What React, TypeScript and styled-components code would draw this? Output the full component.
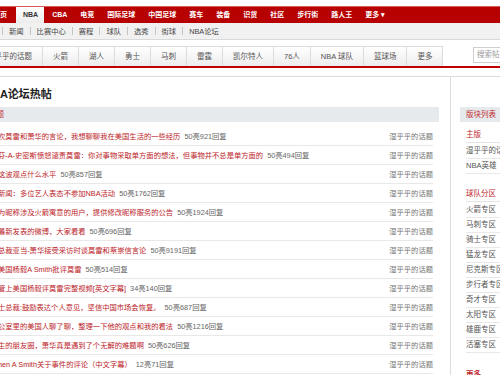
import React from 'react';
import styled, { createGlobalStyle } from 'styled-components';

const GlobalStyle = createGlobalStyle`
  body {
    margin: 0;
    background: #fff;
    overflow: hidden;
    font-family: "Liberation Sans", "Noto Sans CJK SC", sans-serif;
  }
`;

const Page = styled.div`
  width: 500px;
  height: 375px;
  overflow: hidden;
`;

// top red channel bar
const TopBar = styled.div`
  padding-top: 6px;
`;

const RedBand = styled.div`
  display: flex;
  align-items: flex-end;
  height: 17px;
  background: #b70000;
  border-top: 1px solid #d85a5a;
  box-sizing: border-box;
  margin-left: -13px;
`;

const NavItem = styled.a<{ active?: boolean }>`
  display: block;
  height: 16px;
  line-height: 16px;
  padding: 0 6px;
  font-size: 7px;
  font-weight: bold;
  white-space: nowrap;
  color: ${(p) => (p.active ? '#333' : '#fff')};
  background: ${(p) => (p.active ? 'linear-gradient(#ffffff, #ececec)' : 'transparent')};
  margin: ${(p) => (p.active ? '0 1px 0 3px' : '0')};
  & + & {
    border-left: 1px solid ${(p) => (p.active ? 'transparent' : '#8f0000')};
  }
`;

const SubNav = styled.div`
  display: flex;
  align-items: center;
  height: 16px;
  background: #f1f1f1;
  border-bottom: 1px solid #d9d9d9;
  padding-left: 2px;
`;

const SubSep = styled.span`
  width: 1px;
  height: 8px;
  background: #c4c4c4;
`;

const SubLink = styled.a`
  margin: 0 6px;
  font-size: 7.3px;
  color: #444;
  white-space: nowrap;
`;

const TabRow = styled.div`
  display: flex;
  align-items: flex-end;
  margin-top: 6px;
  margin-left: -24px;
  width: 564px;
  height: 20px;
  border-bottom: 2px solid #c00000;
`;

const Tab = styled.a`
  display: block;
  height: 19px;
  line-height: 19px;
  padding: 0 10px;
  margin-right: -1px;
  border: 1px solid #dcdcdc;
  border-bottom: none;
  background: linear-gradient(#ffffff, #ededed);
  font-size: 7.5px;
  color: #555;
  white-space: nowrap;
`;

const Search = styled.div`
  margin-left: auto;
  margin-bottom: 3px;
  width: 62px;
  height: 14px;
  line-height: 14px;
  border: 1px solid #cfcfcf;
  padding-left: 3px;
  font-size: 7.5px;
  color: #999;
  background: #fff;
`;

const Content = styled.div`
  display: flex;
  margin-top: 8px;
  border-top: 1px solid #dcdcdc;
  height: 300px;
`;

const Main = styled.div`
  width: 455px;
  margin-left: -16px;
  padding: 9px 11px 0 0;
  border-right: 1px solid #dcdcdc;
  flex-shrink: 0;
`;

const Heading = styled.h1`
  margin: 0 0 5px;
  font-size: 11px;
  line-height: 16px;
  font-weight: bold;
  color: #222;
`;

const HeadRow = styled.div`
  height: 15px;
  line-height: 15px;
  background: #e6eaec;
  padding-left: 5px;
  font-size: 7.5px;
  color: #c0272d;
  margin-bottom: 5px;
`;

const Row = styled.div`
  display: flex;
  align-items: center;
  height: 18px;
  padding-left: 14px;
  margin-right: 6px;
  border-bottom: 1px solid #e8e8e8;
  font-size: 7.3px;
  white-space: nowrap;
`;

const Title = styled.a`
  color: #bb2329;
`;

const Count = styled.span`
  margin-left: 4px;
  color: #666;
`;

const Board = styled.span`
  margin-left: auto;
  color: #777;
`;

const Sidebar = styled.div`
  flex: 1;
  padding: 30px 0 0 9px;
`;

const SideHead = styled.div`
  height: 15px;
  line-height: 15px;
  background: #e6eaec;
  padding-left: 6px;
  font-size: 7.5px;
  color: #c0272d;
  margin-bottom: 5px;
`;

const Group = styled.div<{ gap?: number }>`
  margin-left: 6px;
  margin-top: ${(p) => p.gap || 0}px;
`;

const GroupTitle = styled.div`
  height: 15px;
  line-height: 15px;
  border-bottom: 1px solid #e3e3e3;
  font-size: 7.5px;
  color: #c0272d;
  margin-bottom: 1px;
`;

const SideItem = styled.div`
  height: 14px;
  line-height: 14px;
  border-bottom: 1px solid #e8e8e8;
  font-size: 7.5px;
  color: #555;
  white-space: nowrap;
`;

const More = styled.div`
  margin: 15px 0 0 6px;
  font-size: 7.5px;
  font-weight: bold;
  color: #c0272d;
`;

const channels = ['首页', 'NBA', 'CBA', '电竞', '国际足球', '中国足球', '赛车', '装备', '识货', '社区', '步行街', '路人王', '更多 ▾'];
const subLinks = ['新闻', '比赛中心', '赛程', '球队', '选秀', '街球', 'NBA论坛'];
const tabs = ['湿乎乎的话题', '火箭', '湖人', '勇士', '马刺', '雷霆', '凯尔特人', '76人', 'NBA 球队', '篮球场', '更多'];

const posts = [
  ['吹莫雷和萧华的言论，我想聊聊我在美国生活的一些经历', '50亮921回复'],
  ['芬-A-史密斯愤怒谴责莫雷：你对事物采取单方面的想法，但事物并不总是单方面的', '50亮494回复'],
  ['这波观点什么水平', '50亮857回复'],
  ['新闻：多位艺人表态不参加NBA活动', '50亮1762回复'],
  ['为昵称涉及火箭寓意的用户，提供修改昵称服务的公告', '50亮1924回复'],
  ['最新发表的微博，大家看看', '50亮696回复'],
  ['总裁亚当-萧华接受采访时谈莫雷和蔡崇信言论', '50亮9191回复'],
  ['美国杨毅A Smith批评莫雷', '50亮514回复'],
  ['管上美国杨毅评莫雷完整视频[英文字幕]', '34亮140回复'],
  ['士总裁:鼓励表达个人意见，坚信中国市场会恢复。', '50亮687回复'],
  ['公室里的美国人聊了聊，整理一下他的观点和我的看法', '50亮1216回复'],
  ['生的朋友圈，萧华真是遇到了个无解的难题啊', '50亮626回复'],
  ['hen A Smith关于事件的评论（中文字幕）', '12亮71回复'],
];

const teams = ['火箭专区', '马刺专区', '骑士专区', '猛龙专区', '尼克斯专区', '步行者专区', '奇才专区', '太阳专区', '雄鹿专区', '活塞专区'];

export default function App() {
  return (
    <Page>
      <GlobalStyle />
      <TopBar>
        <RedBand>
          {channels.map((c) => (
            <NavItem key={c} active={c === 'NBA'}>{c}</NavItem>
          ))}
        </RedBand>
      </TopBar>
      <SubNav>
        {subLinks.map((s) => (
          <React.Fragment key={s}>
            <SubSep />
            <SubLink>{s}</SubLink>
          </React.Fragment>
        ))}
      </SubNav>
      <TabRow>
        {tabs.map((t) => (
          <Tab key={t}>{t}</Tab>
        ))}
        <Search>搜索帖子</Search>
      </TabRow>
      <Content>
        <Main>
          <Heading>NBA论坛热帖</Heading>
          <HeadRow>主题</HeadRow>
          {posts.map(([title, count]) => (
            <Row key={title}>
              <Title>{title}</Title>
              <Count>{count}</Count>
              <Board>湿乎乎的话题</Board>
            </Row>
          ))}
        </Main>
        <Sidebar>
          <SideHead>版块列表</SideHead>
          <Group>
            <GroupTitle>主版</GroupTitle>
            <SideItem>湿乎乎的话题</SideItem>
            <SideItem>NBA英雄</SideItem>
          </Group>
          <Group gap={12}>
            <GroupTitle>球队分区</GroupTitle>
            {teams.map((t) => (
              <SideItem key={t}>{t}</SideItem>
            ))}
          </Group>
          <More>更多</More>
        </Sidebar>
      </Content>
    </Page>
  );
}
